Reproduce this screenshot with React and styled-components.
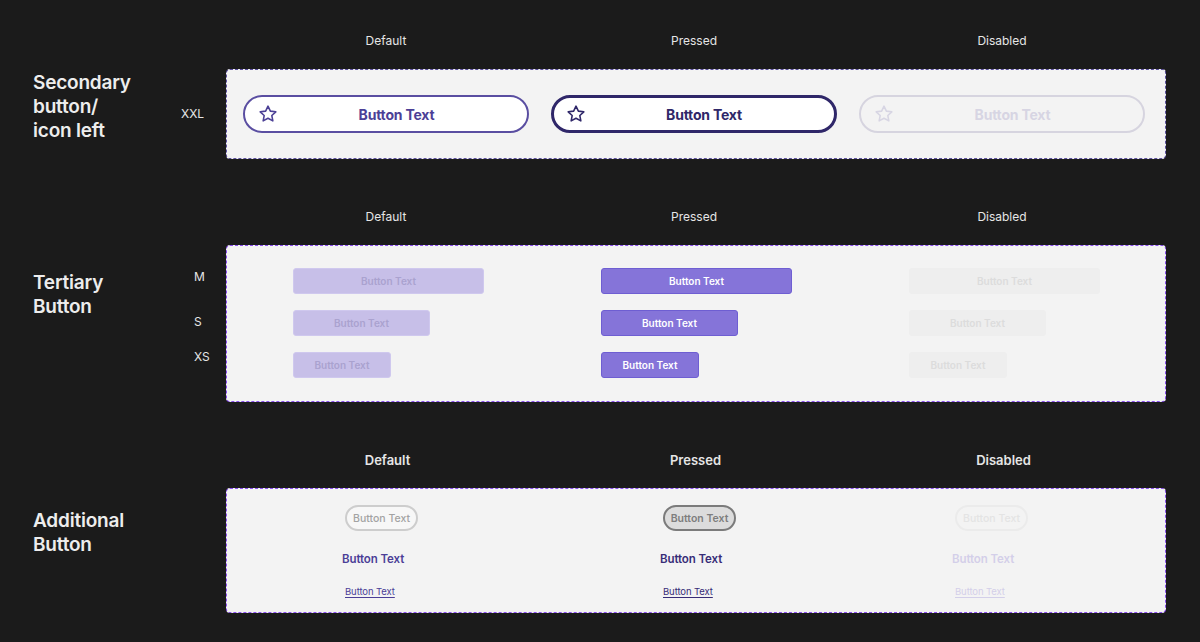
import React from "react";
import styled, { createGlobalStyle } from "styled-components";

const GlobalStyle = createGlobalStyle`
  html, body {
    margin: 0;
    padding: 0;
    background: #1b1b1b;
  }
  body {
    font-family: Inter, "Noto Sans", sans-serif;
    -webkit-font-smoothing: antialiased;
  }
`;

const Page = styled.div`
  width: 1200px;
  height: 642px;
  padding-top: 33px;
  box-sizing: border-box;
  background: #1b1b1b;
  overflow: hidden;
`;

const Section = styled.section`
  display: grid;
  grid-template-columns: 170px 56px 940px;
  grid-template-rows: auto auto;
  margin-bottom: 50px;
`;

const Columns = styled.div`
  grid-column: 3;
  display: grid;
  grid-template-columns: repeat(3, 308px);
  padding: 0 10px 0 6px;
`;

const Headers = styled(Columns)`
  margin-bottom: 20px;
`;

const Header = styled.div`
  text-align: center;
  font-size: ${(p) => (p.$bold ? "13px" : "12px")};
  font-weight: ${(p) => (p.$bold ? 600 : 400)};
  line-height: 16px;
  color: #e6e6e6;
  padding-left: ${(p) => (p.$bold ? 3 : 0)}px;
`;

const Title = styled.h2`
  grid-column: 1;
  grid-row: 2;
  margin: ${(p) => p.$top}px 0 0 33px;
  font-size: 19px;
  font-weight: 600;
  line-height: 24px;
  letter-spacing: -0.2px;
  color: #ededed;
`;

const Labels = styled.div`
  grid-column: 2;
  grid-row: 2;
  display: flex;
  flex-direction: column;
  justify-content: ${(p) => (p.$center ? "center" : "flex-start")};
  padding-left: ${(p) => p.$indent}px;
`;

const SizeLabel = styled.span`
  display: block;
  font-size: 12px;
  line-height: 14px;
  color: #e6e6e6;
  margin-top: ${(p) => p.$top || 0}px;
`;

const Panel = styled.div`
  grid-column: 3;
  grid-row: 2;
  background: #f3f3f3;
  border: 1px dashed ${(p) => p.$line};
  border-radius: 4px;
  box-sizing: border-box;
  height: ${(p) => p.$height}px;
  display: grid;
  grid-template-columns: repeat(3, 308px);
  padding: 0 9px 0 5px;
`;

const Cell = styled.div`
  display: flex;
  flex-direction: column;
  align-items: ${(p) => p.$align || "center"};
  justify-content: ${(p) => p.$justify || "center"};
  padding-left: ${(p) => p.$indent || 0}px;
  padding-top: ${(p) => p.$top || 0}px;
`;

/* XXL secondary button */
const secondary = {
  default: { border: "2px solid #5a4ea1", color: "#4c4096", bg: "#ffffff" },
  pressed: { border: "3px solid #2f2769", color: "#2f2769", bg: "#ffffff" },
  disabled: { border: "2px solid #d6d4df", color: "#d7d5e3", bg: "transparent" },
};

const SecondaryButton = styled.button`
  width: 286px;
  height: 38px;
  box-sizing: border-box;
  border-radius: 19px;
  border: ${(p) => secondary[p.$state].border};
  background: ${(p) => secondary[p.$state].bg};
  color: ${(p) => secondary[p.$state].color};
  display: flex;
  align-items: center;
  padding: 0 12px 0 ${(p) => (p.$state === "pressed" ? 12 : 13)}px;
  font-family: Inter, sans-serif;
  font-size: 14px;
  font-weight: 700;
  letter-spacing: -0.2px;
  cursor: pointer;

  svg {
    flex: none;
  }

  span {
    flex: 1;
    text-align: center;
  }
`;

/* Tertiary button */
const tertiary = {
  default: { bg: "#c7bfe8", border: "#cfc8ee", color: "#aaa2cf" },
  pressed: { bg: "#8574d9", border: "#6e5ed2", color: "#ffffff" },
  disabled: { bg: "#eeeeee", border: "#eeeeee", color: "#dcdcdc" },
};

const sizes = { M: 191, S: 137, XS: 98 };

const TertiaryStack = styled.div`
  display: flex;
  flex-direction: column;
  gap: 16px;
`;

const TertiaryButton = styled.button`
  width: ${(p) => sizes[p.$size]}px;
  height: 26px;
  box-sizing: border-box;
  border-radius: 3px;
  border: 1px solid ${(p) => tertiary[p.$state].border};
  background: ${(p) => tertiary[p.$state].bg};
  color: ${(p) => tertiary[p.$state].color};
  font-family: Inter, sans-serif;
  font-size: 10px;
  font-weight: 600;
  padding: 0;
  cursor: pointer;
`;

/* Additional buttons */
const pill = {
  default: { bg: "#f7f7f7", border: "#cdcdcd", color: "#a3a3a3", weight: 500 },
  pressed: { bg: "#dcdcdc", border: "#7b7b7b", color: "#7e7e7e", weight: 600 },
  disabled: { bg: "#f3f3f3", border: "#ebebeb", color: "#e4e4e4", weight: 500 },
};

const textColors = {
  default: "#4b3e97",
  pressed: "#372c77",
  disabled: "#d3cfe9",
};

const PillButton = styled.button`
  width: 73px;
  height: 26px;
  box-sizing: border-box;
  border-radius: 13px;
  border: 2px solid ${(p) => pill[p.$state].border};
  background: ${(p) => pill[p.$state].bg};
  color: ${(p) => pill[p.$state].color};
  font-family: Inter, sans-serif;
  font-size: 10.5px;
  font-weight: ${(p) => pill[p.$state].weight};
  padding: 0;
  cursor: pointer;
`;

const TextButton = styled.button`
  margin: 21px 0 0 -3px;
  padding: 0;
  border: none;
  background: none;
  font-family: Inter, sans-serif;
  font-size: 11.5px;
  line-height: 14px;
  font-weight: 600;
  letter-spacing: -0.1px;
  color: ${(p) => textColors[p.$state]};
  cursor: pointer;
`;

const LinkButton = styled.a`
  display: block;
  margin-top: 20px;
  font-size: 9.5px;
  line-height: 12px;
  letter-spacing: -0.1px;
  color: ${(p) => textColors[p.$state]};
  text-decoration: underline;
  text-underline-offset: 2px;
  cursor: pointer;
`;

const Star = ({ color }) => (
  <svg width="20" height="20" viewBox="0 0 24 24" fill="none">
    <path
      d="M12 2.6l2.85 5.95 6.5.85-4.75 4.45 1.2 6.4L12 17.1l-5.8 3.15 1.2-6.4-4.75-4.45 6.5-.85z"
      stroke={color}
      strokeWidth="1.9"
      strokeLinejoin="round"
    />
  </svg>
);

const STATES = ["default", "pressed", "disabled"];
const NAMES = { default: "Default", pressed: "Pressed", disabled: "Disabled" };
const pillIndent = { default: 113, pressed: 123, disabled: 107 };

function ColumnHeaders({ bold }) {
  return (
    <Headers>
      {STATES.map((s) => (
        <Header key={s} $bold={bold}>
          {NAMES[s]}
        </Header>
      ))}
    </Headers>
  );
}

export default function App() {
  return (
    <Page>
      <GlobalStyle />

      <Section>
        <ColumnHeaders />
        <Title $top={2}>
          Secondary
          <br />
          button/
          <br />
          icon left
        </Title>
        <Labels $center $indent={11}>
          <SizeLabel>XXL</SizeLabel>
        </Labels>
        <Panel $line="#5b4f9e" $height={90}>
          {STATES.map((s) => (
            <Cell key={s}>
              <SecondaryButton $state={s}>
                <Star color={secondary[s].color} />
                <span>Button Text</span>
              </SecondaryButton>
            </Cell>
          ))}
        </Panel>
      </Section>

      <Section>
        <ColumnHeaders />
        <Title $top={26}>
          Tertiary
          <br />
          Button
        </Title>
        <Labels $indent={24}>
          <SizeLabel $top={25}>M</SizeLabel>
          <SizeLabel $top={31}>S</SizeLabel>
          <SizeLabel $top={21}>XS</SizeLabel>
        </Labels>
        <Panel $line="#8a4ff0" $height={157}>
          {STATES.map((s) => (
            <Cell key={s} $align="flex-start" $indent={61} $justify="flex-start" $top={22}>
              <TertiaryStack>
                {Object.keys(sizes).map((size) => (
                  <TertiaryButton key={size} $state={s} $size={size}>
                    Button Text
                  </TertiaryButton>
                ))}
              </TertiaryStack>
            </Cell>
          ))}
        </Panel>
      </Section>

      <Section>
        <ColumnHeaders bold />
        <Title $top={21}>
          Additional
          <br />
          Button
        </Title>
        <Panel $line="#8a4ff0" $height={125}>
          {STATES.map((s) => (
            <Cell
              key={s}
              $align="flex-start"
              $justify="flex-start"
              $indent={pillIndent[s]}
              $top={16}
            >
              <PillButton $state={s}>Button Text</PillButton>
              <TextButton $state={s}>Button Text</TextButton>
              <LinkButton $state={s}>Button Text</LinkButton>
            </Cell>
          ))}
        </Panel>
      </Section>
    </Page>
  );
}
